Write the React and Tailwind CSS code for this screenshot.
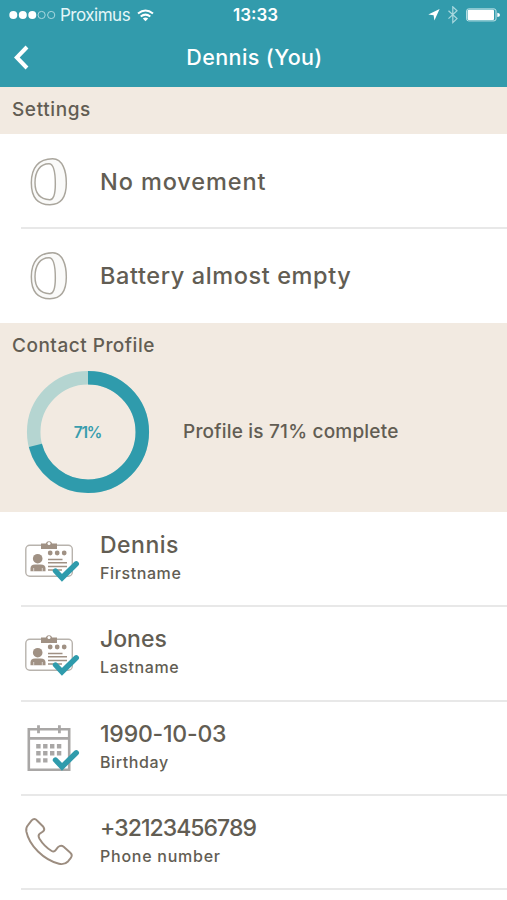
const Check = () => (
  <path d="M55.5 59L62 65.8L76.3 51.8" fill="none" stroke="#2f9bac" strokeWidth="5.4" strokeLinecap="round" />
);

const PebbleIcon = () => (
  <g transform="translate(0 -43.6) scale(.3333)" fill="none" stroke="#aaa69d" strokeWidth="4.4">
    <path
      fill="#fafaf9"
      d="M94 277C94 233 115 205 158 205C188 205 199 242 199 278C199 320 182 343 150 343C112 343 94 318 94 277Z"
    />
    <path
      fill="#fff"
      d="M105 277C105 243 120 220 147 220C161 220 166 242 166 281C166 313 160 329 149 328C119 326 105 308 105 277Z"
    />
  </g>
);

const CardIcon = () => (
  <>
    <rect x="25.8" y="33.3" width="46.5" height="31" rx="4" fill="#fff" stroke="#b8b3ad" strokeWidth="1.4" />
    <g fill="#a09184">
      <path d="M41 31.5H45.8A3.4 3.4 0 0 1 52.2 31.5H57V37H41Z" />
      <circle cx="37.7" cy="46.7" r="4.8" />
      <path d="M30.5 59.3V56.5Q30.5 52.5 35 52.5H40.7Q45.5 52.5 45.5 56.5V59.3Z" />
      <circle cx="50.2" cy="41" r="2.4" />
      <circle cx="57.2" cy="41" r="2.4" />
      <circle cx="64.2" cy="41" r="2.4" />
    </g>
    <circle cx="49" cy="31.4" r="1.5" fill="#fff" />
    <path d="M33.7 56V59.5M42.3 56V59.5" stroke="#fff" strokeWidth=".6" />
    <path d="M48 47.5H62.5M48 50.8H67M48 54.5H67M48 58H62" stroke="#a09184" strokeWidth="1.4" />
    <Check />
  </>
);

const CalendarIcon = () => (
  <>
    <path
      d="M28.8 28.3H69.2V68.7H28.8ZM28.8 37.4H69.2"
      fill="none"
      stroke="#a9a7a6"
      strokeWidth="2.6"
    />
    <path d="M38.5 24.2V32.2M59.4 24.2V32.2" stroke="#a9a7a6" strokeWidth="2.8" />
    <path
      d="M36.2 45.2H63M36.2 52.3H63M36.2 59.4H49"
      stroke="#a9a7a6"
      strokeWidth="4.4"
      strokeDasharray="4.4 2.5"
    />
    <Check />
  </>
);

const PhoneIcon = () => (
  <path
    transform="translate(0 4.8) scale(.3333)"
    d="M84 76L95 62Q103 53 111 62L130 81Q136 89 129 95L119 102Q113 107 118 116Q132 139 154 153Q162 158 167 151L174 142Q183 134 191 141L211 159Q219 166 212 175L204 185Q193 196 177 192C131 180 88 138 79 95Q77 83 84 76Z"
    fill="none"
    stroke="#9c8d80"
    strokeWidth="5.8"
    strokeLinejoin="round"
  />
);

const Row = ({ icon, children }) => (
  <div className="flex h-[94.4px] pl-5">
    <svg className="h-[94px] w-20 shrink-0" viewBox="20 0 80 94">
      {icon}
    </svg>
    <div className="flex-1">{children}</div>
  </div>
);

const Divider = () => <div className="-mt-px -mb-px ml-[21px] h-[2px] bg-[#e8e8e8]" />;

const settings = [
  { title: "No movement", tracking: "tracking-[0.9px]" },
  { title: "Battery almost empty", tracking: "tracking-[0.6px]" },
];

const fields = [
  { value: "Dennis", label: "Firstname", icon: <CardIcon />, vt: "tracking-[0.5px]", lt: "tracking-[0.6px]" },
  { value: "Jones", label: "Lastname", icon: <CardIcon />, vt: "tracking-[0px]", lt: "tracking-[0.6px]" },
  { value: "1990-10-03", label: "Birthday", icon: <CalendarIcon />, vt: "tracking-[-0.2px]", lt: "tracking-[0.6px]" },
  { value: "+32123456789", label: "Phone number", icon: <PhoneIcon />, vt: "tracking-[-0.95px]", lt: "tracking-[0.75px]" },
];

const StatusBar = () => (
  <div className="grid h-[30px] grid-cols-3 items-center text-[17px] leading-[30px]">
    <div className="flex items-center pl-[9px]">
      <svg className="h-[10px] w-[47px]" viewBox="0 0 47 10" fill="#fff">
        <circle cx="4.3" cy="5" r="4" />
        <circle cx="13.8" cy="5" r="4" />
        <circle cx="23.3" cy="5" r="4" />
        <g fill="none" stroke="#a9d8df" strokeWidth="1">
          <circle cx="32.6" cy="5" r="3.6" />
          <circle cx="42.2" cy="5" r="3.6" />
        </g>
      </svg>
      <span className="ml-1 w-[70px] whitespace-nowrap font-normal tracking-[-0.5px] text-[#e4f6f8]">Proximus</span>
      <svg className="ml-[7px] h-[13px] w-[17px] shrink-0" viewBox="0 0 17 13" fill="none" stroke="#fff" strokeWidth="2">
        <path d="M1 4.6Q8.5 -1.7 16 4.6M3.7 7.6Q8.5 3.6 13.3 7.6" />
        <path d="M8.5 12.3L5.8 9.5Q8.5 7.5 11.2 9.5Z" fill="#fff" stroke="none" />
      </svg>
    </div>
    <div className="pl-1 text-center font-semibold">13:33</div>
    <div className="flex items-center justify-end pr-[7px]">
      <svg className="h-[18px] w-[74px]" viewBox="426 6 74 18">
        <path d="M428.3 14.4L439.6 9L434.4 20.5L433.6 15.2Z" fill="#fff" />
        <path d="M448.5 10.7L457 18.6L452.8 22.6V6.8L457 10.7L448.5 18.6" fill="none" stroke="#a9d8df" strokeWidth="1.2" />
        <rect x="466.6" y="8.9" width="29.4" height="12" rx="2" fill="none" stroke="#c3e4e9" />
        <rect x="467.6" y="9.8" width="26.4" height="10.2" rx="1" fill="#fff" />
        <path d="M497.3 12.8Q500 13 500 15T497.3 17Z" fill="#fff" />
      </svg>
    </div>
  </div>
);

const ProgressRing = () => (
  <svg className="h-[124px] w-[124px] shrink-0" viewBox="0 0 124 124">
    <g fill="none" strokeWidth="13.5" transform="rotate(-90 62 62)">
      <circle cx="62" cy="62" r="54.3" stroke="#b5d5d1" />
      <circle cx="62" cy="62" r="54.3" stroke="#2f9bac" pathLength="100" strokeDasharray="71 100" />
    </g>
    <text x="61.5" y="67.5" textAnchor="middle" fontSize="15.5" fontWeight="600" letterSpacing="-1.2" fill="#389dad">
      71%
    </text>
  </svg>
);

export default function App() {
  return (
    <div className="h-[900px] w-[507px] overflow-hidden bg-white font-['Inter',sans-serif] font-medium text-[#625d53]">
      <header className="h-[87px] bg-[#329bac] text-white">
        <StatusBar />
        <div className="grid h-[54px] grid-cols-[60px_1fr_60px] items-center">
          <svg className="h-[54px] w-[60px]" viewBox="0 0 60 54">
            <path d="M27 17L16.8 27.5L27 38" fill="none" stroke="#fff" strokeWidth="4" />
          </svg>
          <h1 className="pl-[2px] text-center text-[21.5px] tracking-[0.4px]">Dennis (You)</h1>
        </div>
      </header>

      <h2 className="h-[47px] bg-[#f2eae1] pl-3 text-[19px] leading-[46px] tracking-[0.6px]">Settings</h2>
      {settings.map((item, index) => (
        <div key={item.title}>
          <Row icon={<PebbleIcon />}>
            <div className={`text-[23.5px] leading-[95px] ${item.tracking}`}>{item.title}</div>
          </Row>
          {index === 0 && <Divider />}
        </div>
      ))}

      <section className="h-[189px] bg-[#f2eae1]">
        <h2 className="h-[47px] pl-3 text-[19px] leading-[46px] tracking-[0.5px]">Contact Profile</h2>
        <div className="flex items-center pl-[26px]">
          <ProgressRing />
          <p className="ml-[33px] pt-px text-[19px] tracking-[0.2px]">Profile is 71% complete</p>
        </div>
      </section>

      {fields.map((field) => (
        <div key={field.label}>
          <Row icon={field.icon}>
            <div className={`pt-[19px] text-[23px] leading-7 ${field.vt}`}>{field.value}</div>
            <div className={`text-[16px] leading-7 ${field.lt}`}>{field.label}</div>
          </Row>
          <Divider />
        </div>
      ))}
    </div>
  );
}
